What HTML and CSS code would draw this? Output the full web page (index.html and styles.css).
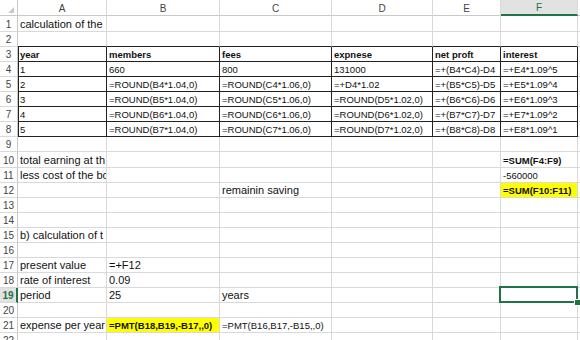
FILE: index.html
```html
<!DOCTYPE html>
<html>
<head>
<meta charset="utf-8">
<link rel="stylesheet" href="styles.css">
</head>
<body>
<div class="sheet">
  <div class="row hdr">
    <span class="c corner"><i class="tri"></i></span>
    <span class="c ch">A</span>
    <span class="c ch">B</span>
    <span class="c ch">C</span>
    <span class="c ch">D</span>
    <span class="c ch">E</span>
    <span class="c ch colsel">F</span>
    <span class="c ch end"></span>
  </div>
  <div class="row tall">
    <span class="c rh">1</span><span class="c">calculation of the</span><span class="c"></span><span class="c"></span><span class="c"></span><span class="c"></span><span class="c"></span><span class="c end"></span>
  </div>
  <div class="row">
    <span class="c rh">2</span><span class="c tt"></span><span class="c tt"></span><span class="c tt"></span><span class="c tt"></span><span class="c tt"></span><span class="c tt"></span><span class="c end"></span>
  </div>
  <div class="row">
    <span class="c rh">3</span><span class="c t tl b">year</span><span class="c t b">members</span><span class="c t b">fees</span><span class="c t b">expnese</span><span class="c t b">net proft</span><span class="c t b">interest</span><span class="c end"></span>
  </div>
  <div class="row">
    <span class="c rh">4</span><span class="c t tl">1</span><span class="c t">660</span><span class="c t">800</span><span class="c t">131000</span><span class="c t">=+(B4*C4)-D4</span><span class="c t">=+E4*1.09^5</span><span class="c end"></span>
  </div>
  <div class="row">
    <span class="c rh">5</span><span class="c t tl">2</span><span class="c t">=ROUND(B4*1.04,0)</span><span class="c t">=ROUND(C4*1.06,0)</span><span class="c t">=+D4*1.02</span><span class="c t">=+(B5*C5)-D5</span><span class="c t">=+E5*1.09^4</span><span class="c end"></span>
  </div>
  <div class="row">
    <span class="c rh">6</span><span class="c t tl">3</span><span class="c t">=ROUND(B5*1.04,0)</span><span class="c t">=ROUND(C5*1.06,0)</span><span class="c t">=ROUND(D5*1.02,0)</span><span class="c t">=+(B6*C6)-D6</span><span class="c t">=+E6*1.09^3</span><span class="c end"></span>
  </div>
  <div class="row">
    <span class="c rh">7</span><span class="c t tl">4</span><span class="c t">=ROUND(B6*1.04,0)</span><span class="c t">=ROUND(C6*1.06,0)</span><span class="c t">=ROUND(D6*1.02,0)</span><span class="c t">=+(B7*C7)-D7</span><span class="c t">=+E7*1.09^2</span><span class="c end"></span>
  </div>
  <div class="row">
    <span class="c rh">8</span><span class="c t tl">5</span><span class="c t">=ROUND(B7*1.04,0)</span><span class="c t">=ROUND(C7*1.06,0)</span><span class="c t">=ROUND(D7*1.02,0)</span><span class="c t">=+(B8*C8)-D8</span><span class="c t">=+E8*1.09^1</span><span class="c end"></span>
  </div>
  <div class="row">
    <span class="c rh">9</span><span class="c"></span><span class="c"></span><span class="c"></span><span class="c"></span><span class="c"></span><span class="c"></span><span class="c end"></span>
  </div>
  <div class="row tall">
    <span class="c rh">10</span><span class="c">total earning at th</span><span class="c"></span><span class="c"></span><span class="c"></span><span class="c"></span><span class="c s b">=SUM(F4:F9)</span><span class="c end"></span>
  </div>
  <div class="row">
    <span class="c rh">11</span><span class="c">less cost of the bo</span><span class="c"></span><span class="c"></span><span class="c"></span><span class="c"></span><span class="c s">-560000</span><span class="c end"></span>
  </div>
  <div class="row">
    <span class="c rh">12</span><span class="c"></span><span class="c"></span><span class="c">remainin saving</span><span class="c"></span><span class="c"></span><span class="c s b y">=SUM(F10:F11)</span><span class="c end"></span>
  </div>
  <div class="row">
    <span class="c rh">13</span><span class="c"></span><span class="c"></span><span class="c"></span><span class="c"></span><span class="c"></span><span class="c"></span><span class="c end"></span>
  </div>
  <div class="row">
    <span class="c rh">14</span><span class="c"></span><span class="c"></span><span class="c"></span><span class="c"></span><span class="c"></span><span class="c"></span><span class="c end"></span>
  </div>
  <div class="row">
    <span class="c rh">15</span><span class="c">b) calculation of t</span><span class="c"></span><span class="c"></span><span class="c"></span><span class="c"></span><span class="c"></span><span class="c end"></span>
  </div>
  <div class="row">
    <span class="c rh">16</span><span class="c"></span><span class="c"></span><span class="c"></span><span class="c"></span><span class="c"></span><span class="c"></span><span class="c end"></span>
  </div>
  <div class="row">
    <span class="c rh">17</span><span class="c">present value</span><span class="c">=+F12</span><span class="c"></span><span class="c"></span><span class="c"></span><span class="c"></span><span class="c end"></span>
  </div>
  <div class="row">
    <span class="c rh">18</span><span class="c">rate of interest</span><span class="c">0.09</span><span class="c"></span><span class="c"></span><span class="c"></span><span class="c"></span><span class="c end"></span>
  </div>
  <div class="row">
    <span class="c rh rowsel">19</span><span class="c">period</span><span class="c">25</span><span class="c">years</span><span class="c"></span><span class="c"></span><span class="c sel"></span><span class="c end"></span>
  </div>
  <div class="row">
    <span class="c rh">20</span><span class="c"></span><span class="c"></span><span class="c"></span><span class="c"></span><span class="c"></span><span class="c"></span><span class="c end"></span>
  </div>
  <div class="row">
    <span class="c rh">21</span><span class="c">expense per year</span><span class="c s b y">=PMT(B18,B19,-B17,,0)</span><span class="c s">=PMT(B16,B17,-B15,,0)</span><span class="c"></span><span class="c"></span><span class="c"></span><span class="c end"></span>
  </div>
  <div class="row">
    <span class="c rh">22</span><span class="c"></span><span class="c"></span><span class="c"></span><span class="c"></span><span class="c"></span><span class="c"></span><span class="c end"></span>
  </div>
</div>
</body>
</html>
```

FILE: styles.css
```css
body {
  margin: 0;
  background: #fff;
  font-family: "Liberation Sans", Arial, sans-serif;
}

.sheet {
  width: 580px;
  height: 340px;
  overflow: hidden;
  background: #fff;
}

.row {
  display: grid;
  grid-template-columns: 18px 89px 113px 112px 101px 68px 77px 2px;
  height: 15px;
}

.row.tall,
.row.hdr {
  height: 16px;
}

.c {
  display: flex;
  align-items: flex-end;
  box-sizing: border-box;
  border-right: 1px solid #d9d9d9;
  border-bottom: 1px solid #d9d9d9;
  padding-left: 2px;
  overflow: hidden;
  white-space: nowrap;
  font-size: 11px;
  line-height: 14px;
  color: #111;
}

.c.end {
  border-right: none;
}

/* headers */
.corner {
  justify-content: flex-end;
  align-items: flex-end;
  padding: 0 3px 2px 0;
  border-right-color: #c8c8c8;
  border-bottom-color: #c8c8c8;
}

.tri {
  display: block;
  width: 6px;
  height: 6px;
  background: #c9c9c9;
  clip-path: polygon(100% 0, 100% 100%, 0 100%);
}

.ch {
  justify-content: center;
  padding-left: 0;
  font-size: 10px;
  line-height: 13px;
  color: #444;
  border-bottom-color: #c8c8c8;
}

.colsel {
  background: #e2e2e2;
  color: #217346;
  border-bottom: 2px solid #217346;
}

.rh {
  justify-content: center;
  padding-left: 0;
  font-size: 10px;
  line-height: 13px;
  color: #444;
  border-right-color: #c8c8c8;
}

.rowsel {
  background: #e2e2e2;
  color: #217346;
  font-weight: bold;
  border-right: 2px solid #217346;
}

/* bordered table */
.tt {
  border-bottom-color: #222;
}

.t {
  border-right-color: #222;
  border-bottom-color: #222;
  font-size: 9.5px;
  line-height: 13px;
}

.tl {
  box-shadow: inset 1px 0 0 #222;
}

.s {
  font-size: 9.5px;
  line-height: 13px;
}

.b {
  font-weight: bold;
}

.y {
  background: #ffff00;
}

/* active cell */
.sel {
  position: relative;
  overflow: visible;
}

.sel::after {
  content: "";
  position: absolute;
  top: -2px;
  left: -2px;
  right: -1px;
  bottom: -1px;
  border: 2px solid #217346;
  box-sizing: border-box;
}

.sel::before {
  content: "";
  position: absolute;
  right: -4px;
  bottom: -4px;
  width: 5px;
  height: 5px;
  background: #217346;
  border: 1px solid #fff;
  z-index: 2;
}
```
